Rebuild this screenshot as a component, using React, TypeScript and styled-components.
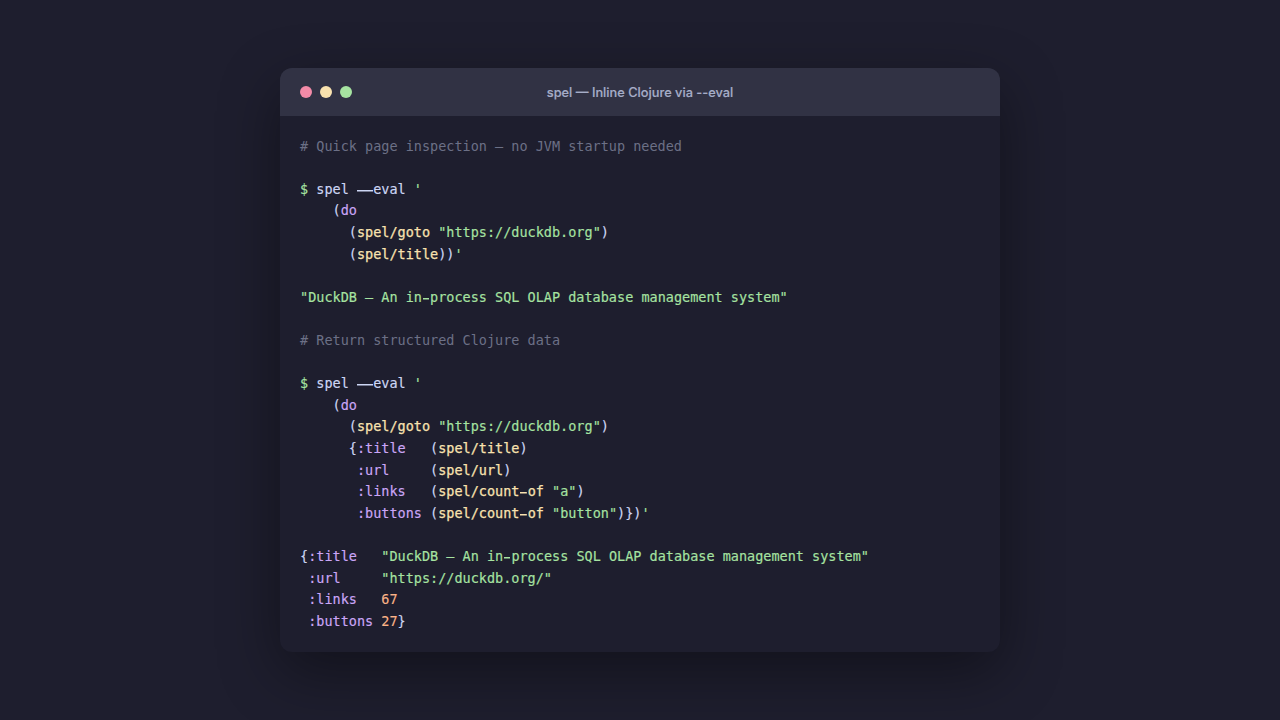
import { createGlobalStyle, styled } from 'styled-components';

type Kind = 'plain' | 'comment' | 'prompt' | 'string' | 'fn' | 'keyword' | 'number';

const tokenColors: Record<Kind, string> = {
  plain: '#cdd6f4',
  comment: '#6c7086',
  prompt: '#a6e3a1',
  string: '#a6e3a1',
  fn: '#f9e2af',
  keyword: '#cba6f7',
  number: '#fab387',
};

const GlobalStyle = createGlobalStyle`
  html, body {
    margin: 0;
    height: 100%;
    background: #1e1e2e;
  }
`;

const Page = styled.main`
  display: flex;
  justify-content: center;
  align-items: center;
  width: 100%;
  height: 100vh;
  background: #1e1e2e;
`;

const Terminal = styled.section`
  width: 720px;
  border-radius: 12px;
  overflow: hidden;
  background: #1e1e2e;
  box-shadow: 0 20px 60px rgba(0, 0, 0, 0.4);
`;

const TitleBar = styled.header`
  position: relative;
  display: flex;
  align-items: center;
  justify-content: center;
  height: 48px;
  background: #313244;
`;

const Dots = styled.div`
  position: absolute;
  left: 20px;
  top: 18px;
  display: flex;
  gap: 8px;
`;

const Dot = styled.span<{ $color: string }>`
  width: 12px;
  height: 12px;
  border-radius: 50%;
  background: ${({ $color }) => $color};
`;

const Title = styled.h1`
  margin: 0;
  padding-top: 1px;
  font-family: Inter, 'Liberation Sans', sans-serif;
  font-size: 12.8px;
  font-weight: 500;
  color: #a6adc8;
  -webkit-text-stroke: 0.15px #a6adc8;
`;

const Code = styled.pre`
  margin: 0;
  padding: 20px;
  font-family: 'DejaVu Sans Mono', 'Liberation Mono', monospace;
  font-size: 13.5px;
  line-height: 1.6;
  color: #cdd6f4;
`;

const Line = styled.div`
  height: 21.6px;
  white-space: pre;
`;

const Token = styled.span<{ $kind: Kind }>`
  color: ${({ $kind }) => tokenColors[$kind]};
  -webkit-text-stroke: ${({ $kind }) => ($kind === 'fn' ? '0.25px' : $kind === 'comment' ? '0' : '0.15px')} currentColor;
`;

// the mono font has a short hyphen: the glyph stays as text but is painted by a bar, so a run reads as one line
const Dash = styled.span<{ $run: boolean }>`
  -webkit-text-fill-color: transparent;
  -webkit-text-stroke: 0;
  background: linear-gradient(currentColor, currentColor) center 64% no-repeat;
  background-size: ${({ $run }) => ($run ? '100%' : '76%')} 1.5px;
`;

type Part = [Kind, string];

const lines: Part[][] = [
  [['comment', '# Quick page inspection — no JVM startup needed']],
  [],
  [['prompt', '$ '], ['plain', 'spel --eval '], ['string', "'"]],
  [['plain', '    ('], ['keyword', 'do']],
  [['plain', '      ('], ['fn', 'spel/goto'], ['plain', ' '], ['string', '"https://duckdb.org"'], ['plain', ')']],
  [['plain', '      ('], ['fn', 'spel/title'], ['plain', '))'], ['string', "'"]],
  [],
  [['string', '"DuckDB — An in-process SQL OLAP database management system"']],
  [],
  [['comment', '# Return structured Clojure data']],
  [],
  [['prompt', '$ '], ['plain', 'spel --eval '], ['string', "'"]],
  [['plain', '    ('], ['keyword', 'do']],
  [['plain', '      ('], ['fn', 'spel/goto'], ['plain', ' '], ['string', '"https://duckdb.org"'], ['plain', ')']],
  [['plain', '      {'], ['keyword', ':title'], ['plain', '   ('], ['fn', 'spel/title'], ['plain', ')']],
  [['plain', '       '], ['keyword', ':url'], ['plain', '     ('], ['fn', 'spel/url'], ['plain', ')']],
  [['plain', '       '], ['keyword', ':links'], ['plain', '   ('], ['fn', 'spel/count-of'], ['plain', ' '], ['string', '"a"'], ['plain', ')']],
  [['plain', '       '], ['keyword', ':buttons'], ['plain', ' ('], ['fn', 'spel/count-of'], ['plain', ' '], ['string', '"button"'], ['plain', ')})'], ['string', "'"]],
  [],
  [['plain', '{'], ['keyword', ':title'], ['plain', '   '], ['string', '"DuckDB — An in-process SQL OLAP database management system"']],
  [['plain', ' '], ['keyword', ':url'], ['plain', '     '], ['string', '"https://duckdb.org/"']],
  [['plain', ' '], ['keyword', ':links'], ['plain', '   '], ['number', '67']],
  [['plain', ' '], ['keyword', ':buttons'], ['plain', ' '], ['number', '27'], ['plain', '}']],
];

function renderText(text: string) {
  return text.split(/(-+)/).map((piece, i) =>
    piece.startsWith('-') ? <Dash key={i} $run={piece.length > 1}>{piece}</Dash> : piece,
  );
}

export default function App() {
  return (
    <Page>
      <GlobalStyle />
      <Terminal>
        <TitleBar>
          <Dots>
            <Dot $color='#f38ba8' />
            <Dot $color='#f9e2af' />
            <Dot $color='#a6e3a1' />
          </Dots>
          <Title>spel — Inline Clojure via --eval</Title>
        </TitleBar>
        <Code>
          {lines.map((parts, i) => (
            <Line key={i}>
              {parts.map(([kind, text], j) => (
                <Token key={j} $kind={kind}>{renderText(text)}</Token>
              ))}
            </Line>
          ))}
        </Code>
      </Terminal>
    </Page>
  );
}
